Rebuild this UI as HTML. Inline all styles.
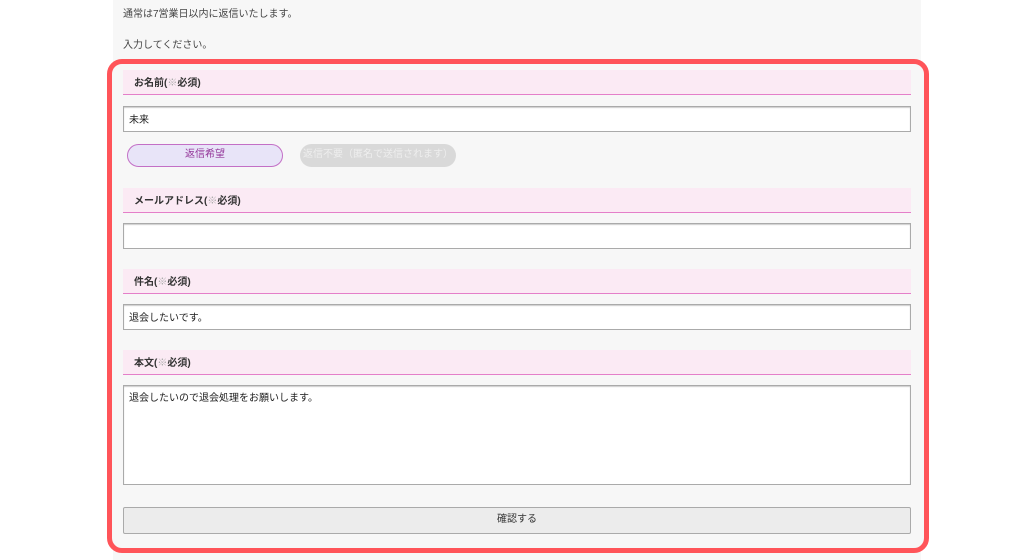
<!DOCTYPE html>
<html><head><meta charset="utf-8"><style>
*{box-sizing:border-box;margin:0;padding:0}
body{width:1024px;height:560px;background:#fff;position:relative;overflow:hidden;font-family:"Liberation Sans","Noto Sans CJK JP",sans-serif;color:#333}
.a{position:absolute}
.gray{left:113px;top:0;width:808px;height:560px;background:#f7f7f7}
.t{font-size:10px;color:#444}
.frame{left:107px;top:59px;width:822px;height:494px;border:5px solid #ff5459;border-radius:15px;background:#f7f7f7}
.lab{left:123px;width:788px;height:25px;background:#fbeaf4;border-bottom:1.5px solid #e47fc9;font-size:10px;font-weight:bold;padding:4px 0 0 11px;color:#333}
.lab span{color:#aaa;font-weight:normal}
.inp{left:123px;width:788px;height:26px;background:#fff;border:1px solid #aaa;box-shadow:inset 0 1px 1px #ccc;font-size:10px;padding:4px 0 0 5px;color:#222}
.b1{left:127px;top:144px;width:156px;height:23px;border:1.5px solid #c36fc6;border-radius:12px;background:#e8e4f8;color:#94379a;font-size:10px;text-align:center;line-height:20px}
.b2{left:300px;top:144px;width:156px;height:23px;border-radius:12px;background:#d9d9d9;color:#eee;font-size:10px;text-align:center;line-height:21px}
.btn{left:123px;top:507px;width:788px;height:27px;background:#ececec;border:1px solid #aaa;border-radius:2px;font-size:10px;text-align:center;line-height:23px;color:#333}
</style></head><body>
<div class="a gray"></div>
<div class="a t" style="left:123px;top:5px">通常は7営業日以内に返信いたします。</div>
<div class="a t" style="left:123px;top:36px">入力してください。</div>
<div class="a frame"></div>
<div class="a lab" style="top:70px">お名前(<span>※</span>必須)</div>
<div class="a inp" style="top:106px">未来</div>
<div class="a b1">返信希望</div>
<div class="a b2">返信不要（匿名で送信されます）</div>
<div class="a lab" style="top:188px">メールアドレス(<span>※</span>必須)</div>
<div class="a inp" style="top:223px"></div>
<div class="a lab" style="top:269px">件名(<span>※</span>必須)</div>
<div class="a inp" style="top:304px">退会したいです。</div>
<div class="a lab" style="top:350px">本文(<span>※</span>必須)</div>
<div class="a inp" style="top:385px;height:100px;padding-top:3px">退会したいので退会処理をお願いします。</div>
<div class="a btn">確認する</div>
</body></html>
